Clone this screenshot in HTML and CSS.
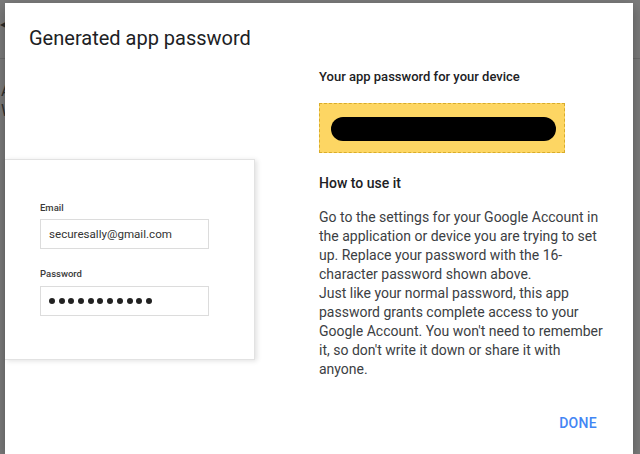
FILE: index.html
```html
<!DOCTYPE html>
<html>
<head>
<meta charset="utf-8">
<link rel="stylesheet" href="styles.css">
</head>
<body>
<div class="page">
  <div class="page-header"><span class="back">&#9664;</span></div>
  <div class="page-text">App passwords<br>Windows Computer</div>
</div>

<div class="dialog">
  <h1 class="title">Generated app password</h1>
  <div class="body">
    <div class="left">
      <div class="card">
        <div class="label">Email</div>
        <div class="input">securesally@gmail.com</div>
        <div class="label label-pw">Password</div>
        <div class="input dots">
          <span></span><span></span><span></span><span></span><span></span><span></span><span></span><span></span><span></span><span></span><span></span>
        </div>
      </div>
    </div>
    <div class="right">
      <div class="subhead">Your app password for your device</div>
      <div class="pwbox"><div class="redact"></div></div>
      <div class="howto">How to use it</div>
      <p class="para">Go to the settings for your Google Account in the application or device you are trying to set up. Replace your password with the 16-character password shown above.<br>Just like your normal password, this app password grants complete access to your Google Account. You won't need to remember it, so don't write it down or share it with anyone.</p>
    </div>
  </div>
  <div class="footer"><span class="done">DONE</span></div>
</div>
</body>
</html>
```

FILE: styles.css
```css
html, body {
  margin: 0;
  padding: 0;
  height: 100%;
  overflow: hidden;
}
body {
  background: #7b7b7b;
  font-family: Roboto, "Liberation Sans", sans-serif;
  position: relative;
}
.page-header {
  height: 58px;
  border-bottom: 1px solid #6c6c6c;
  display: flex;
  align-items: center;
}
.back {
  font-size: 8px;
  color: #2a2a2a;
  margin-top: -10px;
}
.page-text {
  padding-top: 22px;
  font-size: 16px;
  line-height: 20px;
  color: #303030;
  padding-left: 1px;
}
.dialog {
  position: absolute;
  left: 5px;
  top: 3px;
  right: 7px;
  bottom: 0;
  background: #fff;
  box-shadow: 0 4px 12px rgba(0,0,0,0.3);
}
.title {
  margin: 0;
  padding: 23px 24px 0;
  font-size: 20px;
  line-height: 24px;
  font-weight: 400;
  color: #202124;
}
.body {
  display: flex;
  gap: 64px;
}
.left {
  width: 250px;
  flex: none;
}
.card {
  margin-top: 109px;
  background: #fff;
  border: 1px solid #e2e2e2;
  border-left: none;
  box-shadow: 2px 1px 5px rgba(0,0,0,0.12);
  padding: 42px 0 43px 35px;
  box-sizing: border-box;
  height: 201px;
}
.label {
  font-size: 9.5px;
  line-height: 12px;
  font-weight: 500;
  color: #3a3a3a;
  margin-bottom: 5px;
}
.label-pw {
  margin-top: 19px;
  margin-bottom: 6px;
}
.input {
  width: 169px;
  height: 30px;
  box-sizing: border-box;
  border: 1px solid #dcdcdc;
  padding-left: 8px;
  font-size: 11.6px;
  line-height: 28px;
  color: #333;
}
.dots {
  display: flex;
  align-items: center;
  gap: 3.7px;
}
.dots span {
  width: 6px;
  height: 6px;
  border-radius: 50%;
  background: #222;
}
.right {
  width: 292px;
  padding-top: 19px;
}
.subhead {
  font-size: 13px;
  line-height: 16px;
  font-weight: 500;
  color: #202124;
}
.pwbox {
  margin-top: 18px;
  width: 246px;
  height: 50px;
  box-sizing: border-box;
  background: #fdd663;
  border: 1px dashed #d9ac2a;
  padding: 13px 8px 0 11px;
}
.redact {
  height: 24px;
  border-radius: 12px;
  background: #000;
}
.howto {
  margin-top: 22px;
  font-size: 14px;
  line-height: 16px;
  font-weight: 500;
  color: #202124;
}
.para {
  margin: 17px 0 0;
  font-size: 14px;
  line-height: 19px;
  color: #3c4043;
}
.footer {
  display: flex;
  justify-content: flex-end;
  padding: 36px 36px 0 0;
}
.done {
  font-size: 14px;
  line-height: 16px;
  font-weight: 500;
  letter-spacing: 0.3px;
  color: #4285f4;
}
```
